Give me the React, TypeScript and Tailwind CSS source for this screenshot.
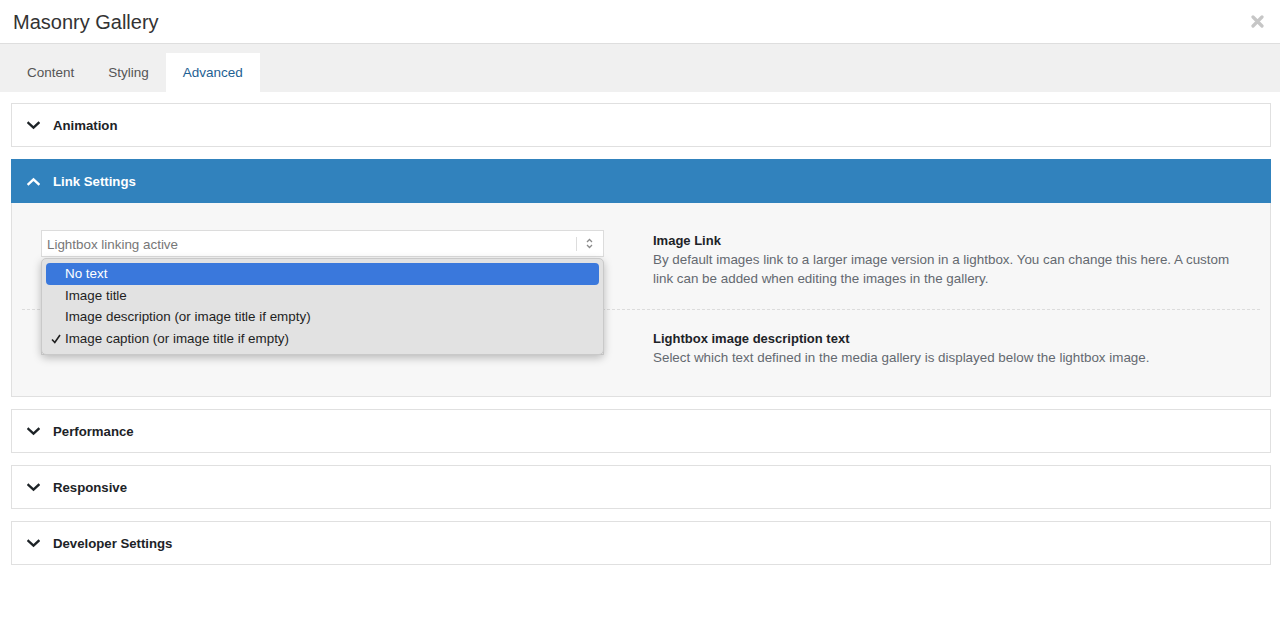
import React from 'react';

const font = { fontFamily: '"Liberation Sans", Arial, sans-serif' };

function Chevron({ up = false, white = false }: { up?: boolean; white?: boolean }) {
  return (
    <svg width="13" height="9" viewBox="0 0 13 9" className="shrink-0">
      <path
        d={up ? 'M1.5 7 L6.5 2.3 L11.5 7' : 'M1.5 2 L6.5 6.7 L11.5 2'}
        fill="none"
        stroke={white ? '#ffffff' : '#1d2327'}
        strokeWidth="2.4"
        strokeLinecap="square"
      />
    </svg>
  );
}

function Panel({ title }: { title: string }) {
  return (
    <div className="h-[44px] border border-[#e0e0e0] bg-white flex items-center pl-[15px] gap-[13px] pt-px">
      <Chevron />
      <span className="text-[13.2px] font-bold text-[#1d2327]">{title}</span>
    </div>
  );
}

function SelectBox({ value }: { value: string }) {
  return (
    <div className="h-[27px] w-[563px] shrink-0 border border-[#dcdcdc] bg-white flex items-center pl-[5px] pr-[10px]">
      <span className="flex-1 text-[13.4px] text-[#777] pt-[4px]">{value}</span>
      <div className="w-px h-[14px] bg-[#ddd] mr-[9px]" />
      <svg width="7" height="11" viewBox="0 0 7 11">
        <path d="M1 4 L3.5 1.5 L6 4" fill="none" stroke="#8a8a8a" strokeWidth="1.3" />
        <path d="M1 7 L3.5 9.5 L6 7" fill="none" stroke="#8a8a8a" strokeWidth="1.3" />
      </svg>
    </div>
  );
}

const options = [
  'No text',
  'Image title',
  'Image description (or image title if empty)',
  'Image caption (or image title if empty)',
];

export default function App() {
  return (
    <div className="w-full h-[617px] bg-white relative" style={font}>
      {/* header */}
      <div className="h-[44px] border-b border-[#dedede] flex items-center justify-between pl-[13px] pr-[16px]">
        <span className="text-[20px] text-[#333]">Masonry Gallery</span>
        <svg width="13" height="13" viewBox="0 0 13 13">
          <path d="M2 2 L11 11 M11 2 L2 11" stroke="#c6c6c6" strokeWidth="3.2" strokeLinecap="round" />
        </svg>
      </div>

      {/* tabs */}
      <div className="h-[48px] bg-[#f0f0f0] flex items-end pl-[10px]">
        <div className="h-[39px] px-[17px] flex items-center text-[13.5px] text-[#555] pt-[2px]">Content</div>
        <div className="h-[39px] px-[17px] flex items-center text-[13.5px] text-[#555] pt-[2px]">Styling</div>
        <div className="h-[39px] px-[17px] flex items-center text-[13.5px] text-[#1e6193] bg-white pt-[2px]">Advanced</div>
      </div>

      {/* panels */}
      <div className="pl-[11px] pr-[9px] pt-[11px] flex flex-col gap-[12px]">
        <Panel title="Animation" />

        <div>
          <div className="h-[44px] bg-[#3182bd] flex items-center pl-[16px] gap-[13px] pt-px">
            <Chevron up white />
            <span className="text-[13.2px] font-bold text-white">Link Settings</span>
          </div>
          <div className="h-[194px] bg-[#f7f7f7] border border-t-0 border-[#e0e0e0] flex flex-col">
            <div className="flex pt-[27px] pb-[21px] pl-[29px] pr-[30px] gap-[49px]">
              <SelectBox value="Lightbox linking active" />
              <div className="flex-1 text-[13.4px] leading-[19px] pt-[1px]">
                <div className="font-bold text-[13px] text-[#1d2327]">Image Link</div>
                <div className="text-[#646970]">
                  By default images link to a larger image version in a lightbox. You can change this here. A custom
                  link can be added when editing the images in the gallery.
                </div>
              </div>
            </div>
            <div className="mx-[10px] border-t border-dashed border-[#dcdcdc]" />
            <div className="flex pt-[18px] pl-[29px] pr-[30px] gap-[49px]">
              <SelectBox value="" />
              <div className="flex-1 text-[13.4px] leading-[19px] pt-[1px]">
                <div className="font-bold text-[13px] text-[#1d2327]">Lightbox image description text</div>
                <div className="text-[#646970]">
                  Select which text defined in the media gallery is displayed below the lightbox image.
                </div>
              </div>
            </div>
          </div>
        </div>

        <Panel title="Performance" />
        <Panel title="Responsive" />
        <Panel title="Developer Settings" />
      </div>

      {/* open native select menu */}
      <div className="absolute left-[41px] top-[258px] w-[563px] h-[97px] rounded-[5px] bg-[#e2e2e2] border border-[#c9c9c9] shadow-[0_3px_8px_rgba(0,0,0,0.25)] pt-[4px] px-[4px]">
        {options.map((o, i) => (
          <div
            key={o}
            className={
              i === 0
                ? 'h-[21.5px] rounded-[4px] bg-[#3a78dc] text-white flex items-center pl-[19px] text-[13.4px] pt-px'
                : 'h-[21.5px] flex items-center pl-[19px] text-[13.4px] text-[#1f1f1f] relative pt-px'
            }
          >
            {i === 3 && (
              <svg width="10" height="10" viewBox="0 0 10 10" className="absolute left-[5px] top-[6px]">
                <path d="M1 5.5 L3.8 8.5 L9 1" fill="none" stroke="#1f1f1f" strokeWidth="1.6" />
              </svg>
            )}
            {o}
          </div>
        ))}
      </div>
    </div>
  );
}
